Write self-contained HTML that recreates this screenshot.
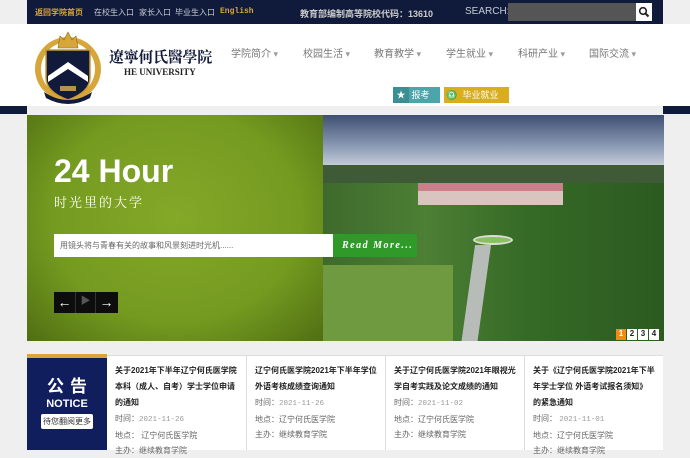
<!DOCTYPE html>
<html><head><meta charset="utf-8"><style>
*{margin:0;padding:0;box-sizing:border-box}
body{width:690px;height:450px;overflow:hidden;background:#efefef;font-family:"Liberation Sans","Noto Sans CJK SC",sans-serif;position:relative}
.abs{position:absolute}
.top{left:27px;top:0;width:636px;height:24px;background:#101b3b;color:#c9ccd6;font-size:8px}
.top span{position:absolute;top:7px;white-space:nowrap}
.hdr{left:0;top:24px;width:690px;height:82px;background:#fff}
.nav{top:45px;font-size:10px;color:#777;white-space:nowrap}
.nav:after{content:" ▾";color:#999;font-size:9px}
.notice{top:355px;height:95px;background:#fff;border-top:1px solid #ddd}
.item{font-size:8px;line-height:15px;color:#666;padding:7px 8px 0 8px;border-left:1px solid #ddd}
.item b{color:#222;font-weight:bold;display:block;line-height:16px}
.item .d{font-family:"Liberation Mono",monospace;font-size:7.5px;color:#999}
</style></head><body>
<div class="abs top">
 <span style="left:8px;color:#d9a53c;font-weight:bold">返回学院首页</span>
 <span style="left:67px">在校生入口</span>
 <span style="left:112px">家长入口</span>
 <span style="left:148px">毕业生入口</span>
 <span style="left:193px;color:#d9a53c;font-family:'Liberation Mono',monospace;font-weight:bold">English</span>
 <span style="left:273px;color:#ccc;font-weight:bold;font-size:9px">教育部编制高等院校代码：13610</span>
 <span style="left:438px;font-size:10px;top:6px">SEARCH:</span>
 <div class="abs" style="left:481px;top:3px;width:128px;height:18px;background:#555"></div>
 <div class="abs" style="left:609px;top:3px;width:16px;height:18px;background:#fff"><svg width="16" height="18"><circle cx="7" cy="8" r="3.3" fill="none" stroke="#222" stroke-width="1.6"/><line x1="9.5" y1="10.5" x2="12.5" y2="13.5" stroke="#222" stroke-width="2"/></svg></div>
</div>
<div class="abs hdr"></div>
<div class="abs" style="left:0;top:106px;width:27px;height:8px;background:#101b3b"></div>
<div class="abs" style="left:663px;top:106px;width:27px;height:8px;background:#101b3b"></div>
<!-- logo -->
<svg class="abs" style="left:30px;top:26px" width="76" height="78" viewBox="0 0 76 78">
 <ellipse cx="38" cy="43" rx="33" ry="32" fill="#d7a63a"/>
 <ellipse cx="38" cy="43" rx="27" ry="27" fill="#fff"/>
 <path d="M16 24 L60 24 L60 52 Q60 66 38 74 Q16 66 16 52Z" fill="#111a3a" stroke="#c99a33" stroke-width="1.5"/>
 <path d="M18 50 L38 36 L58 50 L58 56 L38 43 L18 56Z" fill="#fff"/>
 <rect x="30" y="60" width="16" height="5" fill="#b89050"/>
 <path d="M28 22 L30 10 L34 14 L38 6 L42 14 L46 10 L48 22Z" fill="#d7a63a" stroke="#8a6a20" stroke-width=".6"/>
 <path d="M14 66 Q38 82 62 66 L60 72 Q38 84 16 72Z" fill="#111a3a"/>
</svg>
<div class="abs" style="left:109px;top:46px;font-family:'Noto Serif CJK SC',serif;font-size:15px;font-weight:bold;color:#111a3a;letter-spacing:-.3px">遼寧何氏醫學院</div>
<div class="abs" style="left:124px;top:67px;font-family:'Liberation Serif',serif;font-size:9px;font-weight:bold;color:#222">HE UNIVERSITY</div>
<div class="abs nav" style="left:231px">学院简介</div>
<div class="abs nav" style="left:303px">校园生活</div>
<div class="abs nav" style="left:374px">教育教学</div>
<div class="abs nav" style="left:446px">学生就业</div>
<div class="abs nav" style="left:518px">科研产业</div>
<div class="abs nav" style="left:589px">国际交流</div>
<div class="abs" style="left:393px;top:87px;width:47px;height:16px;background:#4aa6a8;color:#fff;font-size:9px;line-height:16px"><span style="display:inline-block;width:16px;text-align:center;background:#3b8f92">★</span> 报考</div>
<div class="abs" style="left:444px;top:87px;width:65px;height:16px;background:#d8ad1e;color:#fff;font-size:9px;line-height:16px"><span style="display:inline-block;width:16px;text-align:center">♎</span> 毕业就业</div>
<!-- banner -->
<div class="abs" style="left:27px;top:115px;width:297px;height:226px;background:radial-gradient(ellipse at 50% 45%,#84a828 0%,#749a20 60%,#4f6e12 100%)"></div>
<div class="abs" style="left:323px;top:115px;width:341px;height:226px;overflow:hidden;background:#3e6a2a">
 <div class="abs" style="left:0;top:0;width:341px;height:52px;background:linear-gradient(#3f4f72,#8b9bb5 60%,#c8d0da)"></div>
 <div class="abs" style="left:0;top:50px;width:341px;height:20px;background:#3e5a36"></div>
 <div class="abs" style="left:0;top:68px;width:341px;height:158px;background:linear-gradient(90deg,#3e6a2c,#4d7f34 30%,#356a26 60%,#2c5a20)"></div>
 <div class="abs" style="left:0;top:150px;width:130px;height:76px;background:#6f9a40"></div>
 <div class="abs" style="left:95px;top:68px;width:145px;height:22px;background:#d8c5c0"></div>
 <div class="abs" style="left:95px;top:68px;width:145px;height:8px;background:#c9808a"></div>
 <div class="abs" style="left:150px;top:120px;width:40px;height:10px;border-radius:50%;background:#8ac060;border:2px solid #ddd"></div>
 <div class="abs" style="left:145px;top:130px;width:16px;height:100px;background:#b8bcb8;transform:skewX(-8deg)"></div>
 <div class="abs" style="left:293px;top:214px;width:43px;height:11px;display:flex;gap:1px">
  <span style="width:10px;background:#f08a1a;color:#fff;font-size:8px;text-align:center;font-weight:bold">1</span>
  <span style="width:10px;background:#fff;color:#222;font-size:8px;text-align:center;font-weight:bold">2</span>
  <span style="width:10px;background:#fff;color:#222;font-size:8px;text-align:center;font-weight:bold">3</span>
  <span style="width:10px;background:#fff;color:#222;font-size:8px;text-align:center;font-weight:bold">4</span>
 </div>
</div>
<div class="abs" style="left:54px;top:153px;color:#fff;font-size:32px;font-weight:bold">24 Hour</div>
<div class="abs" style="left:54px;top:192px;color:#fff;font-size:13px;font-family:'Noto Serif CJK SC',serif;letter-spacing:2px">时光里的大学</div>
<div class="abs" style="left:54px;top:234px;width:279px;height:23px;background:#fff;color:#666;font-size:8px;line-height:23px;padding-left:6px">用镜头将与青春有关的故事和风景刻进时光机......</div>
<div class="abs" style="left:333px;top:234px;width:84px;height:23px;background:#2f9a2a;color:#fff;font-size:10px;line-height:23px;padding-left:9px;font-family:'Liberation Serif',serif;font-style:italic;font-weight:bold;letter-spacing:1.5px">Read More...</div>
<div class="abs" style="left:54px;top:292px;width:64px;height:21px;background:#0d0d0d;color:#fff;font-size:14px;line-height:20px;display:flex">
 <span style="width:21px;text-align:center">←</span><span style="width:21px;text-align:center;color:#555;border-left:1px solid #333;border-right:1px solid #333;font-size:10px">▶</span><span style="width:21px;text-align:center">→</span>
</div>
<!-- notice -->
<div class="abs" style="left:27px;top:354px;width:80px;height:96px;background:#101e5e;border-top:4px solid #d9a53c;color:#fff;text-align:center">
 <div style="font-size:17px;font-weight:bold;margin-top:14px;letter-spacing:6px;padding-left:6px">公告</div>
 <div style="font-size:11px;font-weight:bold;margin-top:1px">NOTICE</div>
 <div style="margin:4px auto 0;width:52px;height:15px;background:#fff;color:#333;font-size:8px;line-height:15px;border-radius:2px">待您翻阅更多</div>
</div>
<div class="abs notice" style="left:107px;width:556px;display:flex">
 <div class="item" style="width:139px;border-left:none"><b>关于2021年下半年辽宁何氏医学院 本科（成人、自考）学士学位申请的通知</b>时间：<span class="d">2021-11-26</span><br>地点： 辽宁何氏医学院<br>主办：继续教育学院</div>
 <div class="item" style="width:139px"><b>辽宁何氏医学院2021年下半年学位外语考核成绩查询通知</b>时间：<span class="d">2021-11-26</span><br>地点：辽宁何氏医学院<br>主办：继续教育学院</div>
 <div class="item" style="width:139px"><b>关于辽宁何氏医学院2021年眼视光学自考实践及论文成绩的通知</b>时间：<span class="d">2021-11-02</span><br>地点：辽宁何氏医学院<br>主办：继续教育学院</div>
 <div class="item" style="width:139px"><b>关于《辽宁何氏医学院2021年下半年学士学位 外语考试报名须知》的紧急通知</b>时间： <span class="d">2021-11-01</span><br>地点：辽宁何氏医学院<br>主办：继续教育学院</div>
</div>
</body></html>
